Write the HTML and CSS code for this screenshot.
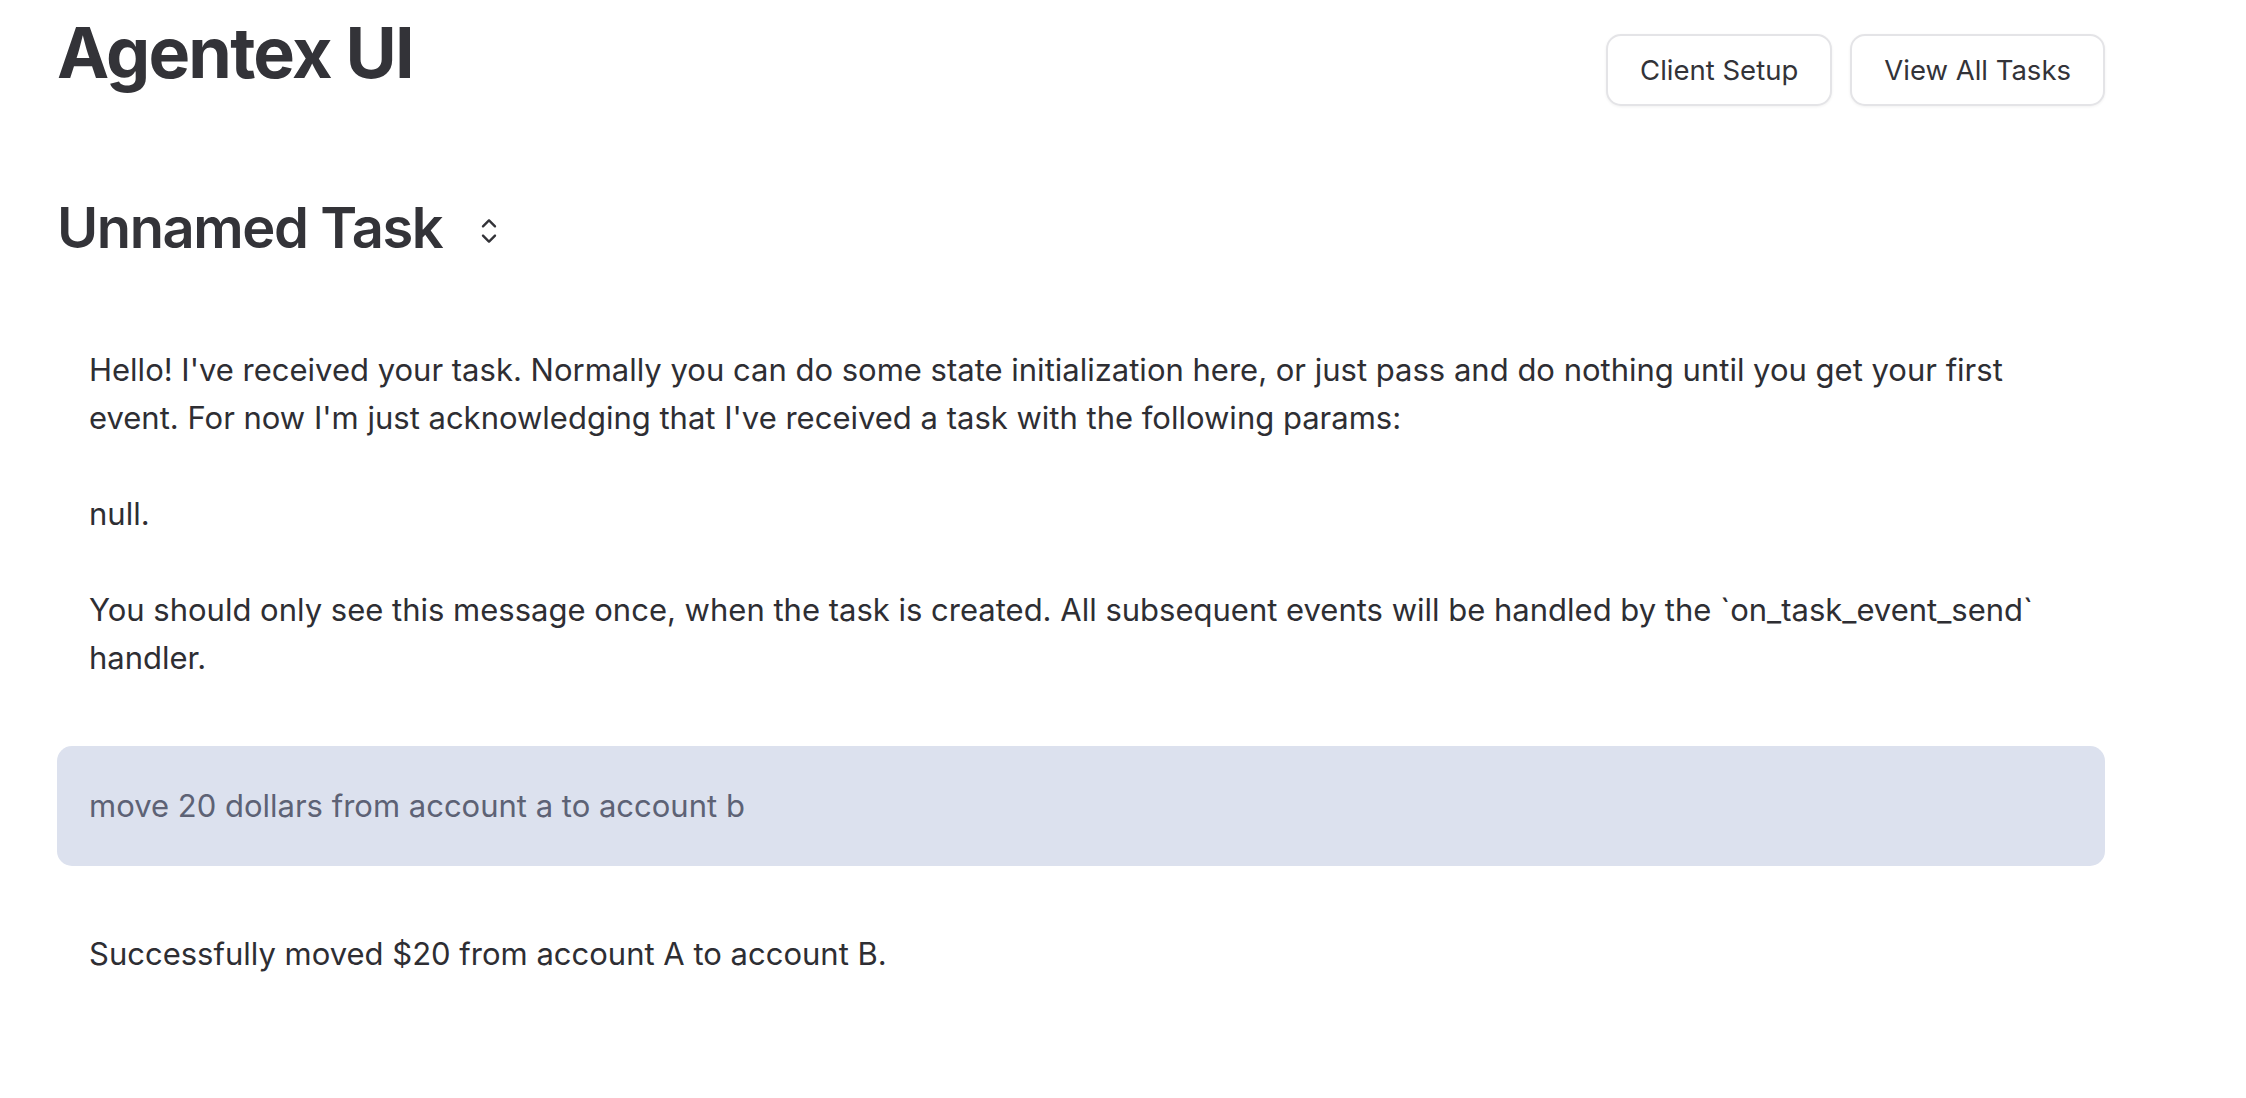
FILE: index.html
```html
<!DOCTYPE html>
<html lang="en">
<head>
<meta charset="utf-8">
<title>Agentex UI</title>
<link rel="stylesheet" href="styles.css">
</head>
<body>
<div class="page">
  <header class="header">
    <h1 class="app-title">Agentex UI</h1>
    <div class="actions">
      <button class="btn">Client Setup</button>
      <button class="btn">View All Tasks</button>
    </div>
  </header>

  <div class="task-head">
    <h2 class="task-title">Unnamed Task</h2>
    <button class="sort-btn" aria-label="Switch task">
      <svg width="40" height="40" viewBox="0 0 15 15" fill="none" xmlns="http://www.w3.org/2000/svg">
        <path d="M4.93179 5.43179C4.75605 5.60753 4.75605 5.89245 4.93179 6.06819C5.10753 6.24392 5.39245 6.24392 5.56819 6.06819L7.49999 4.13638L9.43179 6.06819C9.60753 6.24392 9.89245 6.24392 10.0682 6.06819C10.2439 5.89245 10.2439 5.60753 10.0682 5.43179L7.81819 3.18179C7.73379 3.0974 7.61933 3.04999 7.49999 3.04999C7.38064 3.04999 7.26618 3.0974 7.18179 3.18179L4.93179 5.43179ZM10.0682 9.56819C10.2439 9.39245 10.2439 9.10753 10.0682 8.93179C9.89245 8.75606 9.60753 8.75606 9.43179 8.93179L7.49999 10.8636L5.56819 8.93179C5.39245 8.75606 5.10753 8.75606 4.93179 8.93179C4.75605 9.10753 4.75605 9.39245 4.93179 9.56819L7.18179 11.8182C7.26618 11.9026 7.38064 11.95 7.49999 11.95C7.61933 11.95 7.73379 11.9026 7.81819 11.8182L10.0682 9.56819Z" fill="currentColor" fill-rule="evenodd" clip-rule="evenodd"/>
      </svg>
    </button>
  </div>

  <main class="messages">
    <div class="msg msg-agent">
      <p>Hello! I've received your task. Normally you can do some state initialization here, or just pass and do nothing until you get your first event. For now I'm just acknowledging that I've received a task with the following params:</p>
      <p>null.</p>
      <p>You should only see this message once, when the task is created. All subsequent events will be handled by the `on_task_event_send` handler.</p>
    </div>
    <div class="msg msg-user">
      <p>move 20 dollars from account a to account b</p>
    </div>
    <div class="msg msg-agent">
      <p>Successfully moved $20 from account A to account B.</p>
    </div>
  </main>
</div>
</body>
</html>
```

FILE: styles.css
```css
* {
  box-sizing: border-box;
}

html, body {
  margin: 0;
  padding: 0;
  background: #ffffff;
}

body {
  font-family: Inter, "Noto Sans", "Liberation Sans", sans-serif;
  color: #2e2e33;
}

.page {
  width: 2048px;
  margin-left: 57px;
}

.header {
  display: flex;
  justify-content: space-between;
  align-items: flex-start;
}

.app-title {
  margin: 18px 0 0 0;
  font-size: 70px;
  line-height: 1;
  font-weight: 700;
  letter-spacing: -0.025em;
  color: #333338;
}

.actions {
  display: flex;
  gap: 18px;
  margin-top: 34px;
}

.btn {
  height: 72px;
  padding: 0 32px;
  border: 2px solid #e4e4e7;
  border-radius: 15px;
  background: #ffffff;
  box-shadow: 0 1px 3px rgba(0, 0, 0, 0.06);
  font-family: inherit;
  font-size: 27.5px;
  font-weight: 400;
  color: #333338;
  cursor: pointer;
}

.task-head {
  display: flex;
  align-items: center;
  gap: 27px;
  margin-top: 94px;
}

.task-title {
  margin: 0;
  font-size: 56px;
  line-height: 1;
  font-weight: 600;
  letter-spacing: -0.025em;
  color: #333338;
}

.sort-btn {
  display: flex;
  align-items: center;
  justify-content: center;
  margin-top: 6px;
  padding: 0;
  border: none;
  background: none;
  color: #333338;
}

.messages {
  display: flex;
  flex-direction: column;
  gap: 28px;
  margin-top: 54px;
}

.msg {
  padding: 36px 32px;
  font-size: 31px;
  line-height: 48px;
}

.msg p {
  margin: 0;
}

.msg p + p {
  margin-top: 48px;
}

.msg-agent {
  color: #2e2e33;
}

.msg-user {
  background: #dce1ee;
  border-radius: 15px;
  color: #5d6275;
}
```
